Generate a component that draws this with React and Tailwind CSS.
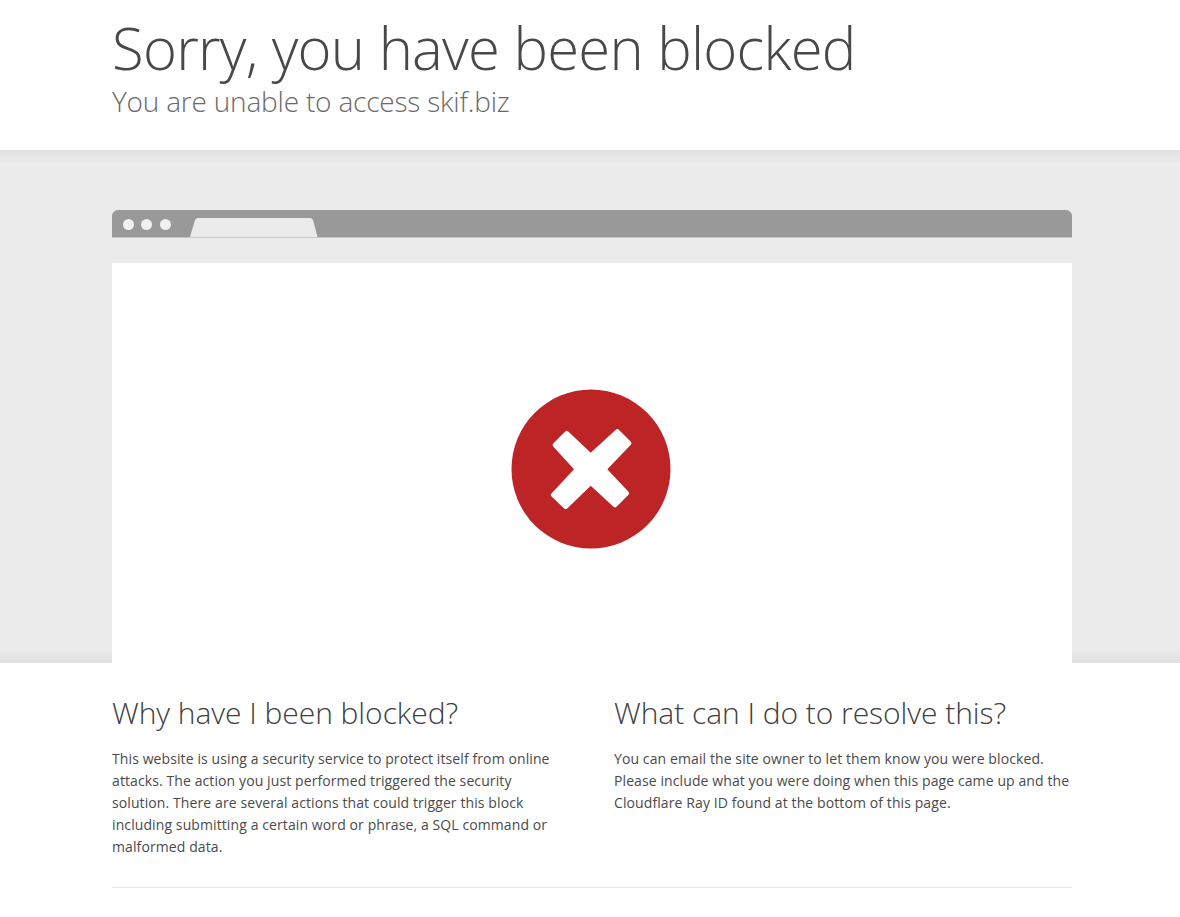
const FONT = "font-['Open_Sans','Noto_Sans',sans-serif]";

function BrowserBar() {
  return (
    <div className="relative flex h-[28px] items-center gap-[7.500px] rounded-t-[6px] border-b border-[#c9c9c9] bg-[#999999] pl-[10.500px] pt-[2px]">
      <span className="h-[11px] w-[11px] rounded-full bg-[#f1f1f1]" />
      <span className="h-[11px] w-[11px] rounded-full bg-[#f1f1f1]" />
      <span className="h-[11px] w-[11px] rounded-full bg-[#f1f1f1]" />
      <svg className="absolute left-[78px] top-[7px]" width="128" height="20" viewBox="0 0 128 20">
        <path d="M0 20 L5 3 Q6 1 8 1 L120 1 Q122 1 123 3 L127.500 20 Z" fill="#ebebeb" />
      </svg>
    </div>
  );
}

function ErrorIcon() {
  return (
    <svg width="160" height="160" viewBox="0 0 160 160">
      <circle cx="80" cy="80" r="79.500" fill="#bd2426" />
      <path
        d="M42.200 54.500 L54.200 42.500 Q55.700 41 57.200 42.400 L79.700 63.700 L104.800 40.800 Q106.300 39.300 107.800 40.800 L119.800 52.800 Q121.300 54.300 119.800 55.800 L96.300 80.300 L117.500 102.800 Q119 104.300 117.500 105.800 L105.500 117.800 Q104 119.300 102.500 117.800 L79.700 96.700 L56.200 119.500 Q54.700 121 53.200 119.500 L40.500 107.500 Q39 106 40.500 104.500 L63 80.300 L42.200 57.500 Q40.700 56 42.200 54.500 Z"
        fill="#ffffff"
      />
    </svg>
  );
}

function Column({ title, children, className }) {
  return (
    <div className={className}>
      <h2 className="text-[30px] font-light leading-[32px] tracking-[-0.05px] text-[#404040]">{title}</h2>
      <p className="mt-[19px] text-[14px] font-normal leading-[22px] tracking-[0.1px] text-[#4a4a4a]">{children}</p>
    </div>
  );
}

export default function App() {
  return (
    <div className={`min-h-[917px] overflow-hidden bg-white ${FONT}`}>
      <header className="h-[150px] pl-[112px] pr-[108px] pt-[14px]">
        <h1 className="text-[58px] font-light leading-[68px] tracking-[-0.75px] text-[#484848]">
          Sorry, you have been blocked
        </h1>
        <h2 className="mt-[2px] text-[28px] font-light leading-[34px] tracking-[-0.2px] text-[#6a6a6a]">
          You are unable to access skif.biz
        </h2>
      </header>

      <section className="h-[513px] bg-[linear-gradient(to_bottom,#e0e0e0_0,#ebebeb_13px,#ebebeb_calc(100%-14px),#dfdfdf_100%)] pl-[112px] pr-[108px] pt-[60px]">
        <BrowserBar />
        <div className="mt-[25px] flex h-[400px] items-center justify-center bg-white">
          <div className="ml-[-2px] mt-[12px]">
            <ErrorIcon />
          </div>
        </div>
      </section>

      <main className="pl-[112px] pr-[108px] pt-[34px]">
        <div className="flex">
          <Column title="Why have I been blocked?" className="w-[502px] pr-[58px]">
            This website is using a security service to protect itself from online attacks. The action you just
            performed triggered the security solution. There are several actions that could trigger this block
            including submitting a certain word or phrase, a SQL command or malformed data.
          </Column>
          <Column title="What can I do to resolve this?" className="w-[458px]">
            You can email the site owner to let them know you were blocked. Please include what you were doing when
            this page came up and the Cloudflare Ray ID found at the bottom of this page.
          </Column>
        </div>
        <div className="mt-[29px] border-t border-[#e8e8e8]" />
      </main>
    </div>
  );
}
